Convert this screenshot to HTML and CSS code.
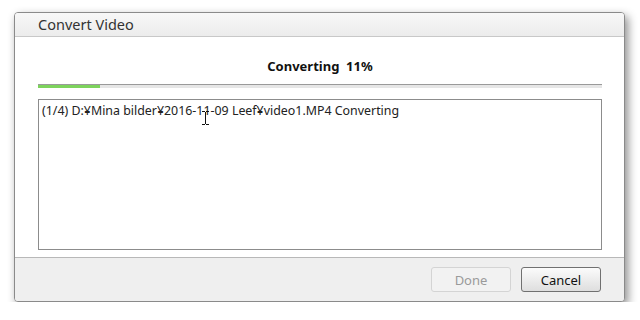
FILE: index.html
```html
<!DOCTYPE html>
<html lang="en">
<head>
  <meta charset="UTF-8">
  <title>Convert Video</title>
  <link rel="stylesheet" href="styles.css">
</head>
<body>
  <div class="window">
    <div class="title-bar">Convert Video</div>

    <div class="content">
      <div class="status">Converting&nbsp;&nbsp;11%</div>
      <div class="progress">
        <div class="progress-fill" style="width: 11%"></div>
      </div>
      <div class="log">
        <div class="log-line">(1/4) D:¥Mina bilder¥2016-11-09 Leef¥video1.MP4 Converting</div>
        <svg class="cursor" width="9" height="14" viewBox="0 0 9 14">
          <path d="M1 0.5h3M5 0.5h3M4.5 1v12M1 13.5h3M5 13.5h3" stroke="#111" stroke-width="1" fill="none"/>
        </svg>
      </div>
    </div>

    <div class="footer">
      <button class="btn" disabled>Done</button>
      <button class="btn">Cancel</button>
    </div>
  </div>
</body>
</html>
```

FILE: styles.css
```css
* {
  margin: 0;
  padding: 0;
  box-sizing: border-box;
}

body {
  background: #fff;
  padding: 12px 0 0 14px;
  font-family: "Noto Sans", "Liberation Sans", sans-serif;
  color: #222;
}

.window {
  width: 611px;
  height: 290px;
  border: 1px solid #8a8a8a;
  border-radius: 4px;
  background: #fff;
  box-shadow: 3px 4px 10px rgba(0, 0, 0, 0.45);
  display: flex;
  flex-direction: column;
  overflow: hidden;
}

/* title */
.title-bar {
  height: 24px;
  padding-left: 23px;
  background: linear-gradient(#f7f7f7, #ececec);
  border-bottom: 1px solid #c8c8c8;
  font-size: 14.5px;
  line-height: 23px;
  color: #333;
}

.content {
  flex: 1;
  padding: 20px 22px 7px 23px;
  display: flex;
  flex-direction: column;
}

.status {
  text-align: center;
  font-size: 13px;
  font-weight: bold;
  line-height: 18px;
  color: #111;
}

.progress {
  margin-top: 9px;
  height: 4px;
  background: #e6e6e6;
  border-top: 1px solid #9a9a9a;
}

.progress-fill {
  height: 3px;
  background: #7dd35c;
}

.log {
  position: relative;
  margin-top: 11px;
  height: 151px;
  border: 1px solid #8c8c8c;
  padding: 3px 3px;
}

.log-line {
  font-size: 12.4px;
  line-height: 16px;
  color: #222;
}

.cursor {
  position: absolute;
  left: 162px;
  top: 11px;
}

/* buttons */
.footer {
  height: 44px;
  background: #efefef;
  border-top: 1px solid #b8b8b8;
  display: flex;
  justify-content: flex-end;
  gap: 10px;
  padding: 9px 23px 0 0;
}

.btn {
  width: 80px;
  height: 25px;
  border: 1px solid #707070;
  border-radius: 3px;
  background: linear-gradient(#fbfbfb, #dedede);
  font-family: "Noto Sans", "Liberation Sans", sans-serif;
  font-size: 13px;
  color: #111;
}

.btn:disabled {
  border-color: #d4d4d4;
  background: #f2f2f2;
  color: #9a9a9a;
}
```
